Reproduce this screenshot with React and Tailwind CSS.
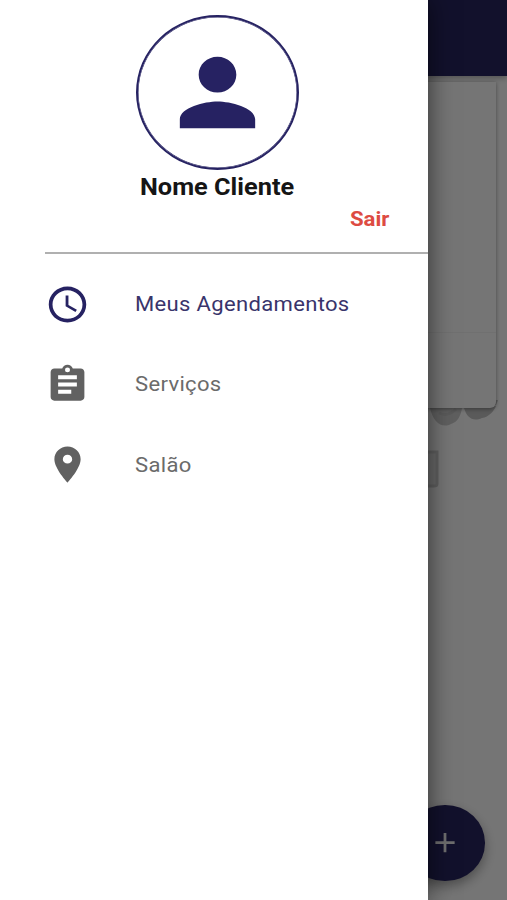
import React from 'react';
import { MdAccessTime, MdPlace, MdPerson, MdAdd } from 'react-icons/md';

const ClipboardIcon = (props) => (
  <svg viewBox="0 0 24 24" fill="currentColor" fillRule="evenodd" {...props}>
    <path d="M19 3h-4.18C14.4 1.84 13.3 1 12 1s-2.4.84-2.82 2H5c-1.1 0-2 .9-2 2v14c0 1.1.9 2 2 2h14c1.1 0 2-.9 2-2V5c0-1.1-.9-2-2-2zM12 2.5a1.35 1.35 0 1 1 0 2.7 1.35 1.35 0 0 1 0-2.7zM14 17.1H7v-2.2h7v2.2zM17 13.1H7v-2.2h10v2.2zM17 9.1H7V6.9h10v2.2z" />
  </svg>
);

const menuItems = [
  { label: 'Meus Agendamentos', icon: MdAccessTime, active: true },
  { label: 'Serviços', icon: ClipboardIcon },
  { label: 'Salão', icon: MdPlace },
];

const MenuItem = ({ label, icon: Icon, active }) => (
  <li>
    <button
      type="button"
      className={`flex h-[80.3px] w-full items-center pl-[45px] ${active ? 'text-[#262262]' : 'text-[#616161]'}`}
    >
      <Icon className="h-[43px] w-[45px] shrink-0" preserveAspectRatio="none" />
      <span className={`ml-[45px] origin-left scale-x-[1.05] pt-px text-[21px] leading-none tracking-[0.3px] whitespace-nowrap ${active ? 'text-[#39346b]' : 'text-[#6b6b6b]'}`}>{label}</span>
    </button>
  </li>
);

// Pantalla de fondo, queda detrás del drawer
const HomeScreen = () => (
  <div className="flex h-full flex-col bg-white">
    <header className="relative z-10 h-[76px] shrink-0 bg-[#282561] shadow-[0_2px_6px_rgba(0,0,0,0.3)]" />
    <main className="relative flex-1">
      <div className="relative z-10 mr-[11px] ml-[11px] mt-[6px] h-[326px] rounded-b-[6px] bg-[#fefefe] shadow-[0_1px_4px_rgba(0,0,0,0.4)]">
        <div className="h-[251px] border-b border-[#f4f4f4]" />
      </div>
      <svg className="absolute top-[324px] left-[420px] h-[90px] w-[87px]" viewBox="0 0 87 90" fill="none">
        <path d="M10 8 C13 22 22 29 31 24 C38 22 41 15 42 8 Z" fill="#d0d0d0" />
        <path d="M19 13 C25 16 31 14 36 9" stroke="#c4c4c4" strokeWidth="3" />
        <path d="M44 8 C47 18 53 22 62 18 C69 17 74 11 76 6 Z" fill="#c4c4c4" />
        <path d="M75 5 L77 0" stroke="#c0c0c0" strokeWidth="2" />
        <path d="M8 52 H17 V84 Q17 86 14 86 H8" fill="#e8e8e8" stroke="#d2d2d2" strokeWidth="3" />
      </svg>
    </main>
    <button
      type="button"
      aria-label="Novo agendamento"
      className="absolute top-[805px] left-[405px] flex h-[75.5px] w-[79.5px] items-center justify-center rounded-[50%] bg-[#282561] text-[#f0f0f0] shadow-[0_5px_12px_rgba(0,0,0,0.35)]"
    >
      <MdAdd className="h-[33px] w-[34px]" />
    </button>
  </div>
);

const Drawer = () => (
  <aside className="absolute inset-y-0 left-0 w-[428px] bg-white shadow-[0_0_24px_rgba(0,0,0,0.6)]">
    <div className="ml-[45px] flex h-[254px] flex-col border-b-2 border-[#b0b0b0] pt-[15px]">
      <div className="ml-[91px] flex h-[155px] w-[163px] shrink-0 items-center justify-center rounded-[50%] border-2 border-[#262262] text-[#262262] shadow-[inset_0_0_0_0.5px_#262262]">
        <MdPerson className="h-[107px] w-[113px]" preserveAspectRatio="none" />
      </div>
      <h1 className="ml-[95px] mt-[4px] origin-left scale-x-[1.055] text-[24px] leading-[26px] font-bold whitespace-nowrap text-[#151515]">Nome Cliente</h1>
      <button type="button" className="mt-[6px] mr-[39px] origin-right scale-x-[1.055] self-end text-[21px] leading-[26px] font-bold text-[#dd4b42]">Sair</button>
    </div>
    <ul className="pt-[10px]">
      {menuItems.map(item => (
        <MenuItem key={item.label} {...item} />
      ))}
    </ul>
  </aside>
);

const App = () => (
  <div className="relative h-[900px] w-[507px] overflow-hidden font-['Roboto',sans-serif]">
    <HomeScreen />
    <div className="absolute inset-0 z-20 bg-black/54">
      <Drawer />
    </div>
  </div>
);

export default App;
